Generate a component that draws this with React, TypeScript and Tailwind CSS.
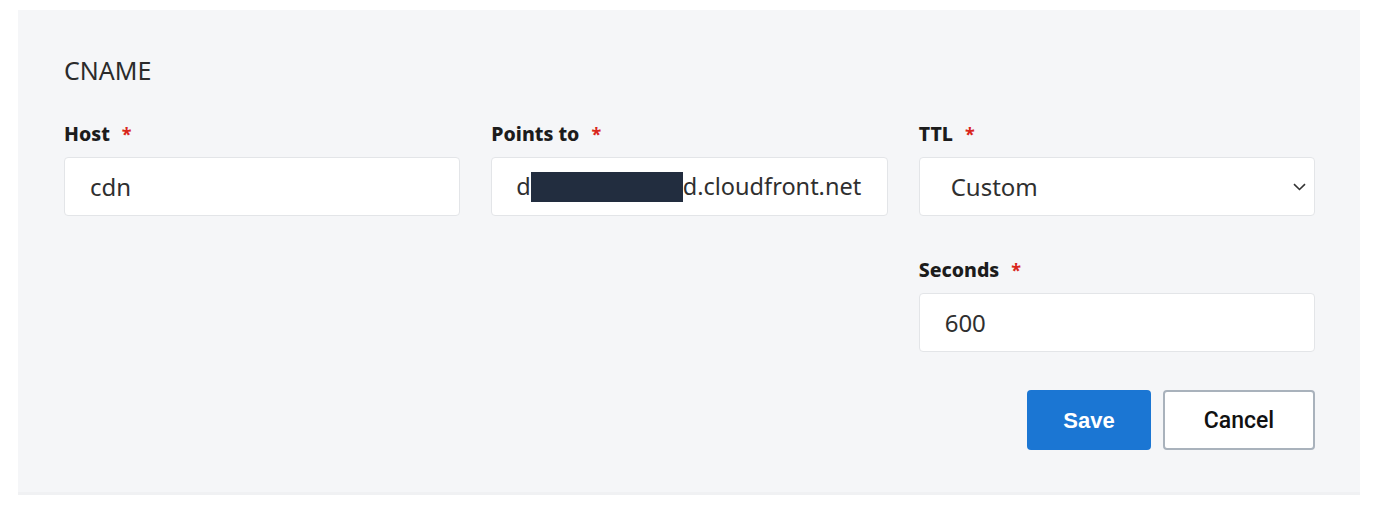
export default function App() {
  return (
    <div className="min-h-screen bg-white pt-[10px] pl-[18px] pr-[15px] font-['Noto_Sans',sans-serif]">
      <div className="bg-[#f5f6f8] pt-[44px] pb-[42px] pl-[46px] pr-[45px] border-b-[3px] border-[#f0f1f3]">
        {/* Record type */}
        <h2 className="text-[25px] leading-[32px] text-[#2b2b2b] font-normal">CNAME</h2>

        <div className="mt-[36px] grid grid-cols-3 gap-x-[31px]">
          {/* Host */}
          <div>
            <Label text="Host" />
            <div className="mt-[11px] h-[59px] bg-white border border-[#e3e5e8] rounded-[4px] flex items-center pl-[25px] text-[24px] text-[#2f2f2f]">
              cdn
            </div>
          </div>

          {/* Points to */}
          <div>
            <Label text="Points to" />
            <div className="mt-[11px] h-[59px] bg-white border border-[#e3e5e8] rounded-[4px] flex items-center pl-[24px] text-[23.5px] text-[#2f2f2f]">
              <span>d</span>
              <span className="inline-block w-[152px] h-[30px] bg-[#222d3f]" />
              <span>d.cloudfront.net</span>
            </div>
          </div>

          {/* TTL */}
          <div>
            <Label text="TTL" />
            <div className="mt-[11px] h-[59px] bg-white border border-[#e3e5e8] rounded-[4px] flex items-center justify-between pl-[31px] pr-[8px] text-[24px] text-[#2f2f2f]">
              <span>Custom</span>
              <svg width="13" height="8" viewBox="0 0 13 8" fill="none">
                <path d="M1 1.2L6.5 6.5L12 1.2" stroke="#333" strokeWidth="1.6" />
              </svg>
            </div>

            <div className="mt-[42px]">
              <Label text="Seconds" />
              <div className="mt-[11px] h-[59px] bg-white border border-[#e3e5e8] rounded-[4px] flex items-center pl-[25px] text-[24px] text-[#2f2f2f]">
                600
              </div>
            </div>

            <div className="mt-[38px] flex justify-end gap-[12px]">
              <button className="w-[124px] h-[60px] rounded-[4px] bg-[#1b76d3] text-white text-[22px] font-bold font-['Liberation_Sans',sans-serif]">
                Save
              </button>
              <button className="w-[152px] h-[60px] pt-[3px] rounded-[4px] bg-white border-2 border-[#a9b2bc] text-[#111] text-[23px] font-medium font-['Roboto',sans-serif]">
                Cancel
              </button>
            </div>
          </div>
        </div>
      </div>
    </div>
  );
}

function Label({ text }: { text: string }) {
  return (
    <div className="h-[24px] flex items-center text-[19.5px] font-extrabold text-[#1c1c1c]">
      <span>{text}</span>
      <span className="ml-[12px] text-[#d9261c] text-[18px] font-bold">*</span>
    </div>
  );
}
